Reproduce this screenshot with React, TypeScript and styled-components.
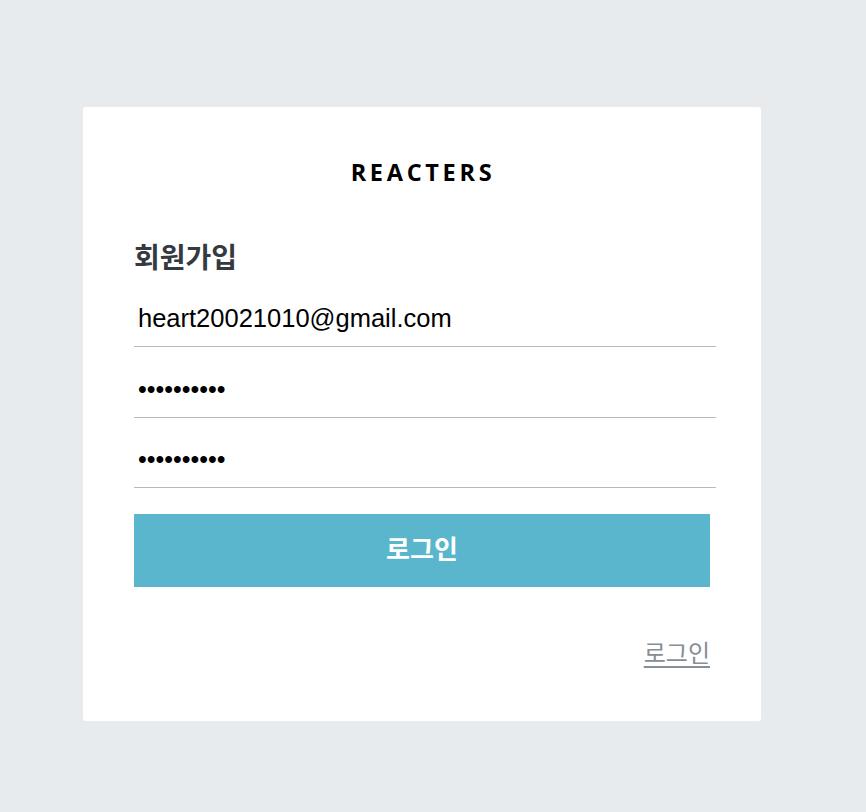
import React from "react";
import styled, { createGlobalStyle } from "styled-components";

const Global = createGlobalStyle`
  html, body { margin: 0; padding: 0; }
  body {
    background: #e7ebee;
    font-family: "Liberation Sans", Arial, sans-serif;
  }
`;

const Page = styled.div`
  min-height: 812px;
  padding: 107px 0 0 83px;
  box-sizing: border-box;
`;

const Card = styled.div`
  width: 678px;
  box-sizing: border-box;
  background: #ffffff;
  border-radius: 3px;
  padding: 50px 45px 51px 51px;
  display: flex;
  flex-direction: column;
`;

const Logo = styled.div`
  height: 30px;
  line-height: 30px;
  text-align: center;
  font-family: "Open Sans", "Noto Sans", sans-serif;
  font-weight: 700;
  font-size: 23.5px;
  letter-spacing: 3.7px;
  color: #000;
  padding-right: 4px;
`;

const Title = styled.h3`
  margin: 51px 0 3px 0;
  height: 36px;
  line-height: 36px;
  font-family: "Noto Sans CJK KR", sans-serif;
  font-weight: 700;
  font-size: 28px;
  color: #343a40;
`;

const Form = styled.form`
  display: flex;
  flex-direction: column;
`;

const Input = styled.input<{ $h?: number }>`
  display: block;
  width: 100%;
  height: ${(p) => p.$h ?? 70}px;
  box-sizing: border-box;
  border: none;
  border-bottom: 1px solid #b5bbc1;
  outline: none;
  padding: 14px 4px 0 4px;
  font-family: "Liberation Sans", Arial, sans-serif;
  font-size: 25.5px;
  color: #000;
  background: transparent;
  &[type="password"] {
    font-size: 25px;
  }
`;

const Button = styled.button`
  margin-top: 26px;
  width: 576px;
  height: 73px;
  border: none;
  border-radius: 0;
  padding: 0 0 6px 0;
  background: #59b6cc;
  color: #ffffff;
  font-family: "Noto Sans CJK KR", sans-serif;
  font-weight: 700;
  font-size: 26px;
  cursor: pointer;
`;

const Footer = styled.div`
  width: 576px;
  margin-top: 47px;
  text-align: right;
  height: 36px;
  line-height: 36px;
`;

const FooterLink = styled.a`
  font-family: "Noto Sans CJK KR", sans-serif;
  font-size: 24px;
  color: #868e96;
  text-decoration: underline;
  text-underline-offset: 4px;
`;

export default function App() {
  return (
    <>
      <Global />
      <Page>
        <Card>
          <Logo>REACTERS</Logo>
          <Title>회원가입</Title>
          <Form onSubmit={(e) => e.preventDefault()}>
            <Input type="text" defaultValue="heart20021010@gmail.com" />
            <Input $h={71} type="password" defaultValue="1234567890" />
            <Input type="password" defaultValue="1234567890" />
            <Button type="submit">로그인</Button>
          </Form>
          <Footer>
            <FooterLink href="#">로그인</FooterLink>
          </Footer>
        </Card>
      </Page>
    </>
  );
}
